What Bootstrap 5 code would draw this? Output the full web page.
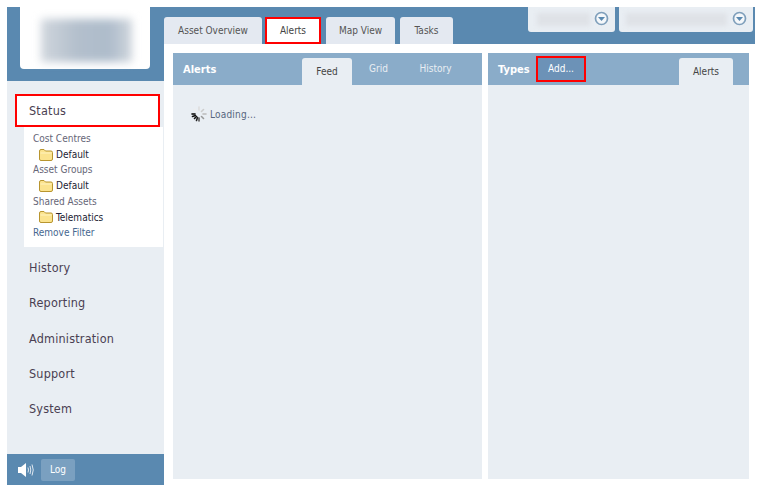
<!DOCTYPE html>
<html lang="en">
<head>
<meta charset="utf-8">
<title>Alerts</title>
<link rel="stylesheet" href="https://cdn.jsdelivr.net/npm/bootstrap@5.3.0/dist/css/bootstrap.min.css">
<style>
html,body{height:100%;background:#fff;}
body{font-family:"DejaVu Sans Condensed","DejaVu Sans",sans-serif;font-stretch:condensed;font-size:10px;color:#444;overflow:hidden;}
.shell{width:757px;height:489px;padding:7px 0 4px 7px;}
.side{width:157px;flex:none;background:#e9eef3;}
.side-top{height:74px;background:#5a89b0;}
.logo-box{width:130px;height:62px;margin-left:13px;background:#fff;border-radius:0 0 4px 4px;padding:12px 18px 7px 21px;}
.logo-blur{width:100%;height:100%;background:linear-gradient(90deg,#d0d6dd,#b3bfcc 40%,#aebccb 75%,#d0d6dd);filter:blur(4px);}
.nav-items{padding-top:13px;flex:1;}
.nav-main{display:block;height:35.3px;line-height:35px;padding-left:22px;font-size:12.5px;letter-spacing:.2px;color:#4a3f52;text-decoration:none;}
.nav-status{width:145px;height:33px;line-height:29px;margin-left:8px;padding-left:12px;background:#fff;border:2px solid #f00;}
.sub-nav{margin-left:17px;width:139px;height:120px;background:#fff;padding:4px 0 0 9px;margin-bottom:3px;font-size:10px;line-height:15.7px;}
.sub-head{color:#667;}
.sub-item{display:flex;align-items:center;gap:3px;padding-left:6px;color:#223;}
.sub-link{color:#46678f;text-decoration:none;}
.side-foot{height:31px;margin-top:1px;background:#5a89b0;display:flex;align-items:center;padding:0 0 0 10px;gap:6px;}
.log-btn{width:34px;height:22px;background:#7aa0c0;border-radius:2px;color:#fff;text-align:center;line-height:21px;font-size:10px;}
.main{flex:1;min-width:0;}
.topbar{height:37px;background:#5a89b0;display:flex;justify-content:space-between;margin-right:2px;}
.top-tabs{display:flex;align-items:flex-end;}
.top-tab{height:27px;line-height:27px;background:#e4e9f1;border-radius:3px 3px 0 0;color:#555;font-size:10px;text-align:center;}
.tt1{width:98px;}
.tt2{width:56px;line-height:23px;background:#fff;border:2px solid #f00;border-radius:0;margin-left:3px;color:#444;}
.tt3{width:69px;margin-left:5px;}
.tt4{width:53px;margin-left:5px;}
.pickers{display:flex;gap:4px;padding-right:2px;height:25px;}
.picker{height:25px;background:#e9eef3;border-radius:0 0 3px 3px;display:flex;align-items:center;justify-content:space-between;padding:0 7px 0 9px;}
.pk1{width:87px;}
.pk2{width:134px;padding-left:7px;}
.pk-blur{height:13px;background:#dfe2e7;filter:blur(2px);}
.pk1 .pk-blur{width:53px;}
.pk2 .pk-blur{width:101px;}
.pk-icon{margin:-2px -1px 0 0;}
.panes{display:flex;gap:6px;padding:9px 0 0 9px;}
.pane{height:426px;background:#e9eef3;}
.pane-l{width:309px;}
.pane-r{width:261px;}
.pane-head{height:32px;background:#8aacc9;display:flex;align-items:flex-end;position:relative;color:#fff;}
.pane-title{font-weight:700;font-size:11px;position:absolute;left:10px;top:9px;}
.pane-tabs{margin-left:auto;display:flex;align-items:flex-end;margin-right:16px;}
.pane-tab{height:27px;line-height:27px;text-align:center;font-size:10px;color:#e9eef3;}
.pane-tab-idle{line-height:21px;}
.pane-tab-on{background:#e9eef3;color:#444;border-radius:3px 3px 0 0;}
.w-feed{width:50px;}
.w-grid{width:53px;}
.w-hist{width:61px;}
.w-alerts{width:54px;}
.add-btn{position:absolute;left:48px;top:3px;width:50px;height:26px;background:#6c92b7;border:2px solid #f00;color:#fff;text-align:center;line-height:21px;font-size:10px;}
.loading{display:flex;align-items:center;gap:3px;padding:21px 0 0 18px;color:#56667e;font-size:10px;letter-spacing:.2px;}
</style>
</head>
<body>
<div class="shell d-flex">
  <div class="side d-flex flex-column">
    <div class="side-top"><div class="logo-box"><div class="logo-blur"></div></div></div>
    <div class="nav-items">
      <a class="nav-main nav-status" href="#">Status</a>
      <div class="sub-nav">
        <div class="sub-head">Cost Centres</div>
        <div class="sub-item"><svg width="14" height="12" viewBox="0 0 14 12"><path d="M.5 2Q.5 .5 2 .5H5L6.500 2H12Q13.500 2 13.500 3.500V10Q13.500 11.500 12 11.500H2Q.5 11.500 .5 10Z" fill="#fbe38e" stroke="#b8952f"/><path d="M1.500 4H12.500" stroke="#fff3bf"/></svg>Default</div>
        <div class="sub-head">Asset Groups</div>
        <div class="sub-item"><svg width="14" height="12" viewBox="0 0 14 12"><path d="M.5 2Q.5 .5 2 .5H5L6.500 2H12Q13.500 2 13.500 3.500V10Q13.500 11.500 12 11.500H2Q.5 11.500 .5 10Z" fill="#fbe38e" stroke="#b8952f"/><path d="M1.500 4H12.500" stroke="#fff3bf"/></svg>Default</div>
        <div class="sub-head">Shared Assets</div>
        <div class="sub-item"><svg width="14" height="12" viewBox="0 0 14 12"><path d="M.5 2Q.5 .5 2 .5H5L6.500 2H12Q13.500 2 13.500 3.500V10Q13.500 11.500 12 11.500H2Q.5 11.500 .5 10Z" fill="#fbe38e" stroke="#b8952f"/><path d="M1.500 4H12.500" stroke="#fff3bf"/></svg>Telematics</div>
        <a class="sub-link" href="#">Remove Filter</a>
      </div>
      <a class="nav-main" href="#">History</a>
      <a class="nav-main" href="#">Reporting</a>
      <a class="nav-main" href="#">Administration</a>
      <a class="nav-main" href="#">Support</a>
      <a class="nav-main" href="#">System</a>
    </div>
    <div class="side-foot">
      <svg width="18" height="16" viewBox="0 0 18 16"><path d="M1 5H4L9 1V15L4 11H1Z" fill="#fff"/><path d="M11 5.500Q12 8 11 10.500M13 4Q14.500 8 13 12M15 2.500Q17.500 8 15 13.500" fill="none" stroke="#dfe8f0" stroke-width="1"/></svg>
      <div class="log-btn">Log</div>
    </div>
  </div>
  <div class="main">
    <div class="topbar">
      <div class="top-tabs">
        <div class="top-tab tt1">Asset Overview</div>
        <div class="top-tab tt2">Alerts</div>
        <div class="top-tab tt3">Map View</div>
        <div class="top-tab tt4">Tasks</div>
      </div>
      <div class="pickers">
        <div class="picker pk1"><div class="pk-blur"></div><svg class="pk-icon" width="15" height="15" viewBox="0 0 15 15"><circle cx="7.500" cy="7.500" r="6" fill="#f4f7fa" stroke="#7f9fbb" stroke-width="1.700"/><path d="M4 6H11L7.500 10Z" fill="#5a89b0"/></svg></div>
        <div class="picker pk2"><div class="pk-blur"></div><svg class="pk-icon" width="15" height="15" viewBox="0 0 15 15"><circle cx="7.500" cy="7.500" r="6" fill="#f4f7fa" stroke="#7f9fbb" stroke-width="1.700"/><path d="M4 6H11L7.500 10Z" fill="#5a89b0"/></svg></div>
      </div>
    </div>
    <div class="panes">
      <div class="pane pane-l">
        <div class="pane-head">
          <div class="pane-title">Alerts</div>
          <div class="pane-tabs">
            <div class="pane-tab pane-tab-on w-feed">Feed</div>
            <div class="pane-tab pane-tab-idle w-grid">Grid</div>
            <div class="pane-tab pane-tab-idle w-hist">History</div>
          </div>
        </div>
        <div class="loading">
          <svg width="16" height="16" viewBox="0 0 16 16" stroke-linecap="round"><g stroke-width="1.600"><path d="M8 1V4" stroke="#ddd"/><path d="M12.500 3.500L10.500 5.500" stroke="#ccc"/><path d="M15 8H12" stroke="#bbb"/><path d="M12.500 12.500L10.500 10.500" stroke="#999"/><path d="M8 15V12" stroke="#555"/><path d="M3.500 12.500L5.500 10.500" stroke="#111"/><path d="M1 8H4" stroke="#000"/><path d="M3.500 3.500L5.500 5.500" stroke="#eee"/><path d="M1.500 10.500L4.500 9.500" stroke="#111"/><path d="M5.500 14.500L6.500 11.500" stroke="#222"/></g></svg>
          <span>Loading...</span>
        </div>
      </div>
      <div class="pane pane-r">
        <div class="pane-head">
          <div class="pane-title">Types</div>
          <div class="add-btn">Add...</div>
          <div class="pane-tabs"><div class="pane-tab pane-tab-on w-alerts">Alerts</div></div>
        </div>
      </div>
    </div>
  </div>
</div>
<script src="https://cdn.jsdelivr.net/npm/bootstrap@5.3.0/dist/js/bootstrap.bundle.min.js"></script>
</body>
</html>
